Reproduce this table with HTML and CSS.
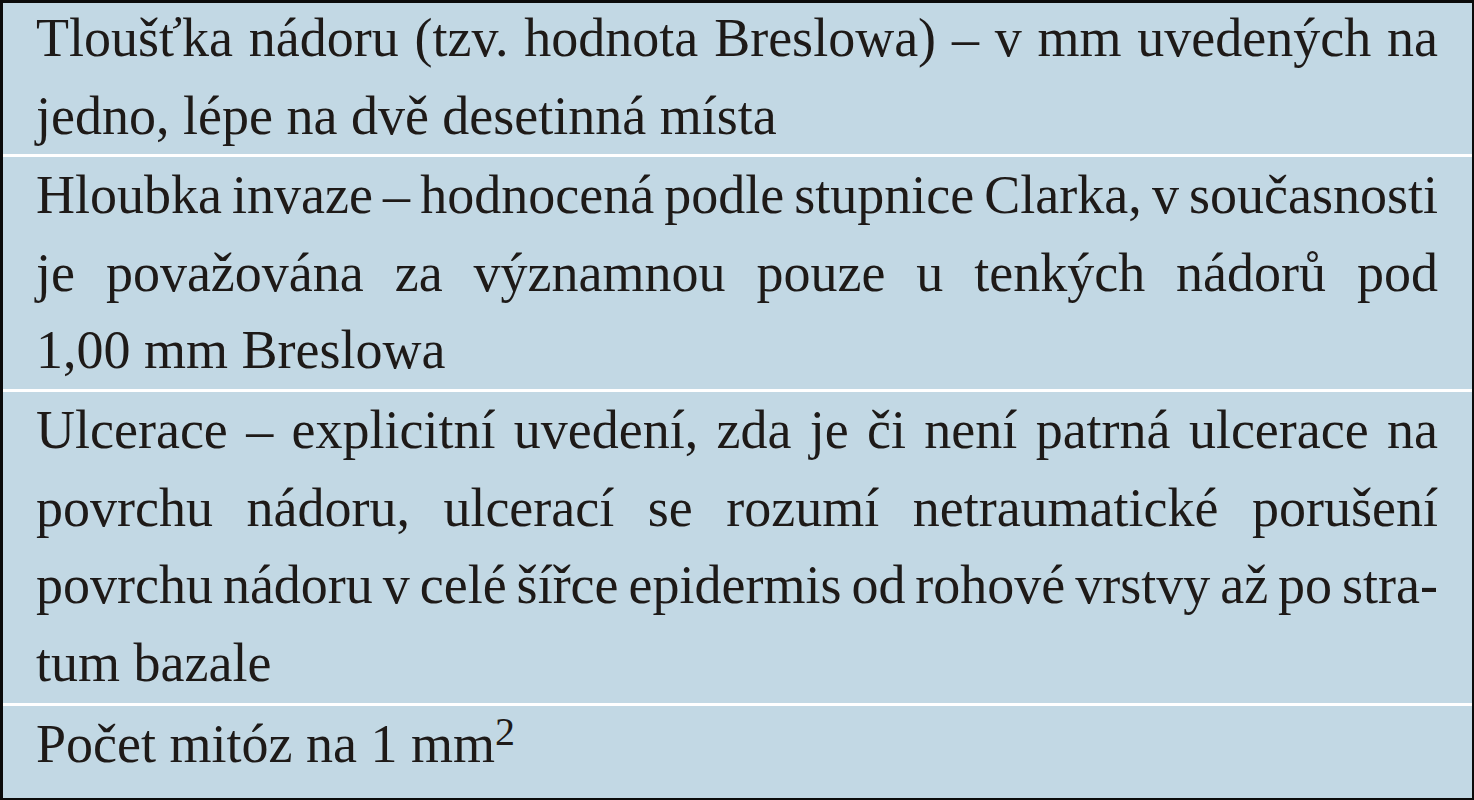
FILE: index.html
```html
<!DOCTYPE html>
<html lang="cs">
<head>
<meta charset="utf-8">
<title>Tabulka</title>
<link rel="stylesheet" href="styles.css">
</head>
<body>
<div class="table">
  <div class="row first">
    <div class="text">
      <span class="line">Tloušťka nádoru (tzv. hodnota Breslowa) – v mm uvedených na</span>
      <span class="line last">jedno, lépe na dvě desetinná místa</span>
    </div>
  </div>
  <div class="row second">
    <div class="text">
      <span class="line">Hloubka invaze – hodnocená podle stupnice Clarka, v současnosti</span>
      <span class="line">je považována za významnou pouze u tenkých nádorů pod</span>
      <span class="line last">1,00 mm Breslowa</span>
    </div>
  </div>
  <div class="row third">
    <div class="text">
      <span class="line">Ulcerace – explicitní uvedení, zda je či není patrná ulcerace na</span>
      <span class="line">povrchu nádoru, ulcerací se rozumí netraumatické porušení</span>
      <span class="line">povrchu nádoru v celé šířce epidermis od rohové vrstvy až po stra-</span>
      <span class="line last">tum bazale</span>
    </div>
  </div>
  <div class="row fourth">
    <div class="text">
      <span class="line last">Počet mitóz na 1 mm<sup class="sup">2</sup></span>
    </div>
  </div>
</div>
</body>
</html>
```

FILE: styles.css
```css
html, body {
  margin: 0;
  padding: 0;
  background: #ffffff;
}

.table {
  width: 1474px;
  height: 800px;
  box-sizing: border-box;
  border-top: 3px solid #0b0b0b;
  border-left: 3px solid #0b0b0b;
  border-right: 2px solid #0b0b0b;
  border-bottom: 2px solid #0b0b0b;
  background: #c2d8e4;
  display: flex;
  flex-direction: column;
  font-family: "Liberation Serif", "Times New Roman", serif;
  font-size: 54px;
  line-height: 77.5px;
  color: #1e1a18;
  overflow: hidden;
}

.row {
  display: flow-root;
  box-sizing: border-box;
  padding: 0 34px 0 33px;
  flex: none;
}

.row + .row {
  border-top: 3px solid #ffffff;
}

.row.first {
  height: 151px;
}

.row.first .text {
  margin-top: -3px;
}

.row.second {
  height: 235px;
}

.row.third {
  height: 314px;
}

.row.fourth {
  flex: 1 1 auto;
}

.line {
  display: block;
  white-space: nowrap;
  text-align: justify;
  text-align-last: justify;
  word-spacing: -5px;
}

.line.last {
  text-align-last: left;
  word-spacing: normal;
}

.sup {
  font-size: 40px;
  line-height: 0;
  vertical-align: 17px;
}
```
